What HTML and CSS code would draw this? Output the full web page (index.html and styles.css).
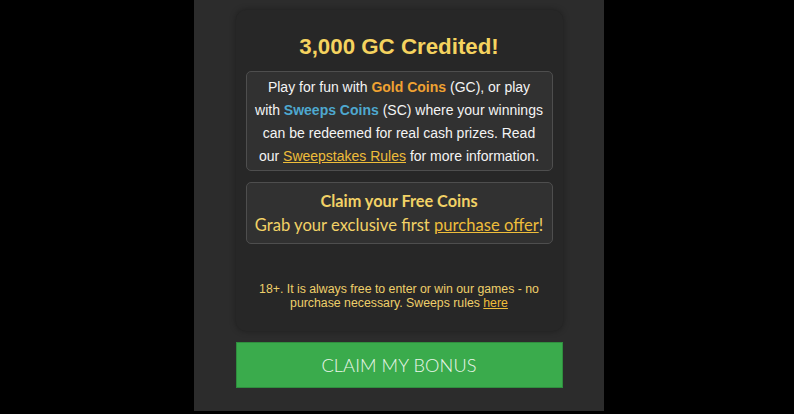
FILE: index.html
```html
<!DOCTYPE html>
<html>
<head>
<meta charset="utf-8">
<link rel="stylesheet" href="styles.css">
</head>
<body>
<div class="panel">
  <div class="card">
    <h1 class="title">3,000 GC Credited!</h1>
    <div class="box info">
      Play for fun with <span class="gold">Gold Coins</span> (GC), or play<br>with <span class="sweeps">Sweeps Coins</span> (SC) where your winnings<br>can be redeemed for real cash prizes. Read<br>our <a class="link" href="#">Sweepstakes Rules</a> for more information.
    </div>
    <div class="box claim">
      <div class="claim-title">Claim your Free Coins</div>
      <div class="claim-text">Grab your exclusive first <a class="link" href="#">purchase offer</a>!</div>
    </div>
    <p class="legal">18+. It is always free to enter or win our games - no purchase necessary. Sweeps rules <a class="link" href="#">here</a></p>
  </div>
  <button class="cta">CLAIM MY BONUS</button>
</div>
</body>
</html>
```
FILE: styles.css
```css
html, body {
  margin: 0;
  padding: 0;
  background: #000;
  height: 100%;
}
body {
  font-family: "Liberation Sans", Arial, sans-serif;
}
.panel {
  width: 410px;
  height: 411px;
  margin-left: 194px;
  background: #2c2c2c;
  padding-top: 10px;
  box-sizing: border-box;
  display: flex;
  flex-direction: column;
  align-items: center;
}
.card {
  width: 327px;
  height: 321px;
  box-sizing: border-box;
  background: #272727;
  border-radius: 10px;
  box-shadow: 0 0 6px rgba(0,0,0,0.35);
  padding: 24px 10px 0;
  display: flex;
  flex-direction: column;
}
.title {
  margin: 0;
  text-align: center;
  color: #f5d35f;
  font-size: 22.3px;
  font-weight: bold;
  line-height: 26px;
}
.box {
  background: #313131;
  border: 1px solid #4e4e4e;
  border-radius: 5px;
  box-sizing: border-box;
  text-align: center;
}
.info {
  margin-top: 11px;
  height: 100px;
  padding: 4px 2px 0;
  color: #f4f4f4;
  font-size: 14px;
  line-height: 23px;
  white-space: nowrap;
}
.gold { color: #f0a232; font-weight: bold; }
.sweeps { color: #4ea8cf; font-weight: bold; }
.link { color: #eebd3a; text-decoration: underline; }
.claim {
  margin-top: 11px;
  height: 62px;
  padding-top: 6px;
  font-family: Lato, "Liberation Sans", sans-serif;
  color: #f2d266;
}
.claim-title {
  font-weight: bold;
  font-size: 16.3px;
  line-height: 24px;
}
.claim-text {
  font-size: 16.6px;
  line-height: 24px;
}
.legal {
  margin: 38px 0 0;
  text-align: center;
  color: #eecf6a;
  font-size: 12.3px;
  line-height: 14px;
  padding: 0 6px;
}
.cta {
  margin-top: 11px;
  width: 327px;
  height: 46px;
  background: #3aab4c;
  border: 1px solid #2f8e3e;
  color: #eaf6ea;
  font-family: Lato, "Liberation Sans", sans-serif;
  font-weight: 300;
  font-size: 18.2px;
  letter-spacing: 0.1px;
  cursor: pointer;
}
```
